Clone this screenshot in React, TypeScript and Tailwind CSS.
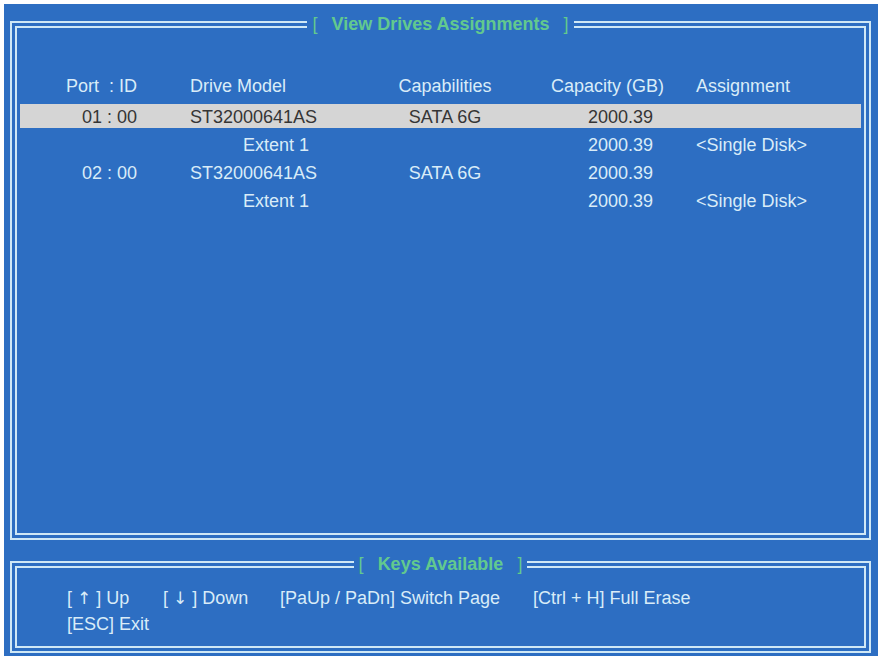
const rows = [
  { port: "01 : 00", model: "ST32000641AS", cap: "SATA 6G", size: "2000.39", assign: "", sel: true },
  { port: "", model: "Extent 1", cap: "", size: "2000.39", assign: "<Single Disk>", ext: true },
  { port: "02 : 00", model: "ST32000641AS", cap: "SATA 6G", size: "2000.39", assign: "" },
  { port: "", model: "Extent 1", cap: "", size: "2000.39", assign: "<Single Disk>", ext: true },
];

const cols = "grid grid-cols-[117px_248px_120px_148px_1fr] items-center whitespace-nowrap";

function Title({ text }: { text: string }) {
  return (
    <legend className="mx-auto px-[5px] text-[18px] leading-[24px] text-[#62c98e] whitespace-pre">
      <span className="font-normal">[</span>
      <span className="mx-[14px] font-bold">{text}</span>
      <span className="font-normal">]</span>
    </legend>
  );
}

export default function App() {
  return (
    <div className="w-[881px] h-[659px] bg-white pt-[4px] pl-[4px] font-['Liberation_Sans',Arial,sans-serif]">
      <div className="w-[874px] h-[652px] bg-[#2d6ec2] pt-[8px] pl-[6px]">
        {/* main panel */}
        <fieldset className="w-[861px] h-[528px] border-[7px] border-double border-[#cfe8f6]">
          <Title text="View Drives Assignments" />
          <div className="pt-[37px] mx-[3px] text-[18px] text-[#d9ecf8]">
            <div className={`${cols} h-[24px] mb-[7px]`}>
              <div className="text-right whitespace-pre">Port  : ID</div>
              <div className="pl-[53px]">Drive Model</div>
              <div className="text-center">Capabilities</div>
              <div className="pl-[46px] overflow-visible">Capacity (GB)</div>
              <div className="pl-[43px]">Assignment</div>
            </div>
            <div className="flex flex-col gap-[4px]">
              {rows.map((r, i) => (
                <div
                  key={i}
                  className={`${cols} h-[24px] ${r.sel ? "bg-[#d5d5d5] text-[#353535]" : ""}`}
                >
                  <div className="text-right">{r.port}</div>
                  <div className={r.ext ? "pl-[106px]" : "pl-[53px]"}>{r.model}</div>
                  <div className="text-center">{r.cap}</div>
                  <div className="text-right">{r.size}</div>
                  <div className="pl-[43px]">{r.assign}</div>
                </div>
              ))}
            </div>
          </div>
        </fieldset>

        {/* keys panel */}
        <fieldset className="mt-[12px] w-[861px] h-[101px] border-[7px] border-double border-[#cfe8f6]">
          <Title text="Keys Available" />
          <div className="pt-[9px] pl-[50px] text-[18px] leading-[26px] text-[#d9ecf8] whitespace-pre">
            <div className="flex">
              <span className="w-[96px]">[ <span className="font-['DejaVu_Sans'] text-[17px]">↑</span> ] Up</span>
              <span className="w-[117px]">[ <span className="font-['DejaVu_Sans'] text-[17px]">↓</span> ] Down</span>
              <span className="w-[253px]">[PaUp / PaDn] Switch Page</span>
              <span>[Ctrl + H] Full Erase</span>
            </div>
            <div>[ESC] Exit</div>
          </div>
        </fieldset>
      </div>
    </div>
  );
}
